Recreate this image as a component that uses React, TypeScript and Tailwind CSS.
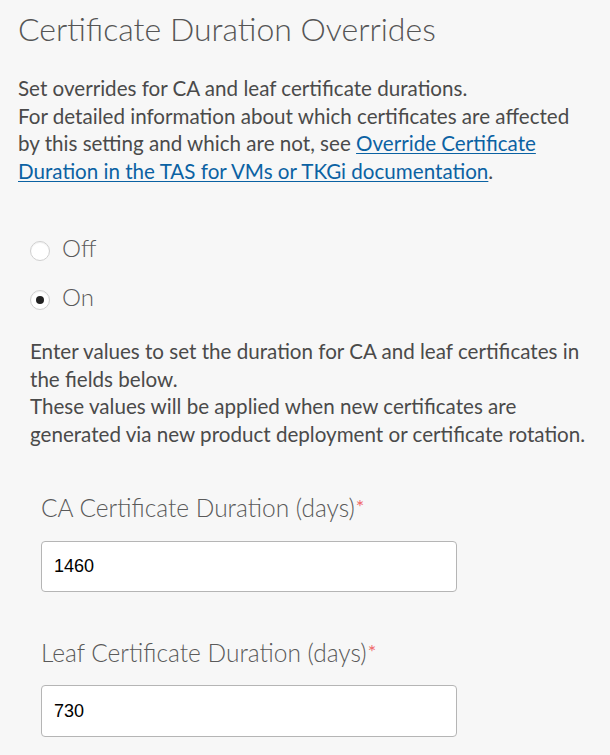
import React from "react";

function Radio({ checked, label }: { checked: boolean; label: string }) {
  return (
    <label className="flex items-start h-[28px]">
      <span className="mt-[7px] w-[20px] h-[20px] rounded-full border border-[#cfcfcf] bg-white flex items-center justify-center shadow-[inset_0_1px_1px_rgba(0,0,0,0.06)]">
        {checked && <span className="w-[8px] h-[8px] rounded-full bg-[#222]" />}
      </span>
      <span className="ml-[12px] text-[24px] leading-[28px] font-light text-[#5a5a5a]">{label}</span>
    </label>
  );
}

function Field({ label, value, mt, h }: { label: string; value: string; mt: string; h: string }) {
  return (
    <div className={mt}>
      <div className="text-[24.5px] leading-[28px] font-light text-[#5a5a5a] whitespace-nowrap">
        {label}
        <span className="ml-[1px] text-[#f06a6a] text-[20px] font-normal align-top relative top-[-2px]">*</span>
      </div>
      <div
        className={`${h} w-[416px] rounded-[4px] border border-[#b5b5b5] bg-white flex items-center pl-[12px] text-[18px] text-black`}
        style={{ fontFamily: '"Liberation Sans", Arial, sans-serif' }}
      >
        {value}
      </div>
    </div>
  );
}

export default function App() {
  return (
    <div className="w-[610px] h-[755px] overflow-hidden bg-[#f7f7f7] pl-[18px] pt-[9px]" style={{ fontFamily: 'Lato, "Noto Sans", sans-serif' }}>
      <h1 className="text-[32px] leading-[40px] font-light text-[#555]">Certificate Duration Overrides</h1>
      <p className="mt-[26px] text-[20.6px] leading-[27.5px] text-[#4a4a4a] whitespace-nowrap">
        Set overrides for CA and leaf certificate durations.
        <br />
        For detailed information about which certificates are affected
        <br />
        by this setting and which are not, see{" "}
        <a className="text-[#0b62a3] underline underline-offset-[2px] decoration-[1px]" href="#">
          Override Certificate
          <br />
          Duration in the TAS for VMs or TKGi documentation
        </a>
        .
      </p>
      <div className="pl-[12px]">
        <div className="mt-[49px] flex flex-col gap-[21px]">
          <Radio checked={false} label="Off" />
          <Radio checked={true} label="On" />
        </div>
        <p className="mt-[27px] text-[20.6px] leading-[27.5px] text-[#4a4a4a] whitespace-nowrap">
          Enter values to set the duration for CA and leaf certificates in
          <br />
          the fields below.
          <br />
          These values will be applied when new certificates are
          <br />
          generated via new product deployment or certificate rotation.
        </p>
        <div className="pl-[11px]">
          <Field label="CA Certificate Duration (days)" value="1460" mt="mt-[46px]" h="mt-[19px] h-[51px]" />
          <Field label="Leaf Certificate Duration (days)" value="730" mt="mt-[47px]" h="mt-[18px] h-[52px]" />
        </div>
      </div>
    </div>
  );
}
